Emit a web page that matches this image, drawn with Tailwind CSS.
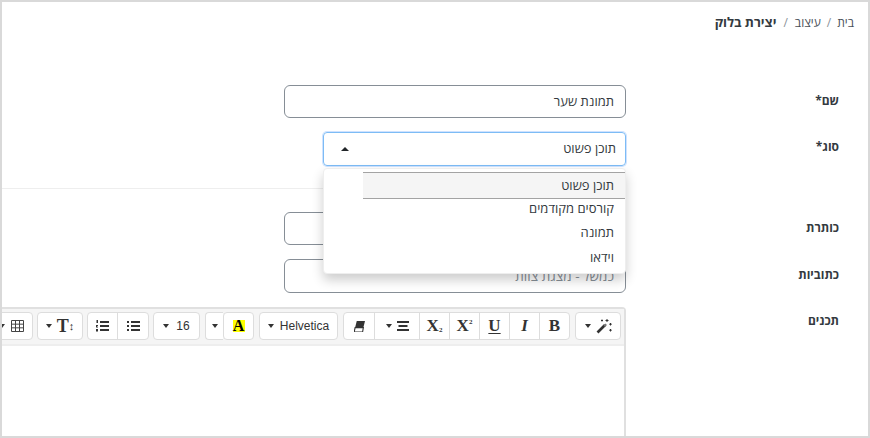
<!DOCTYPE html>
<html lang="he" dir="rtl">
<head>
<meta charset="utf-8">
<script src="https://cdn.jsdelivr.net/npm/@tailwindcss/browser@4"></script>
</head>
<body class="bg-white">
<div class="relative w-[870px] h-[438px] overflow-hidden bg-white border-2 border-[#d9d9d9] font-['Open_Sans','Liberation_Sans',sans-serif] text-[13px] text-[#343a40]">
  <nav class="h-[83px] pt-[11px] pr-[14px]">
    <ol class="flex items-center h-[19px] text-[12px] text-[#495057]">
      <li>בית</li>
      <li class="px-[6px] text-[#8a9299]">/</li>
      <li>עיצוב</li>
      <li class="px-[7px] text-[#8a9299]">/</li>
      <li class="font-bold text-[13px] text-[#343a40]">יצירת בלוק</li>
    </ol>
  </nav>

  <div class="flex mb-[14px]">
    <label class="w-[242px] shrink-0 h-[32px] pr-[29px] flex items-center font-bold text-[12px]">שם*</label>
    <div class="w-[342px] h-[33px] flex items-center pt-[1px] pr-[11px] pl-[12px] rounded-[6px] border border-[#868e96]">תמונת שער</div>
  </div>

  <div class="flex">
    <label class="w-[242px] shrink-0 h-[30px] pr-[29px] flex items-center font-bold text-[12px]">סוג*</label>
    <div class="relative w-[303px] h-[34px]">
      <div class="h-full flex items-center justify-between pr-[9px] pl-[17px] rounded-[4px] border border-[#7dbcf5] shadow-[0_0_0_1px_rgba(13,110,253,0.2)]">
        <span>תוכן פשוט</span>
        <span class="w-0 h-0 border-x-[4px] border-b-[4px] border-x-transparent border-b-[#212529]"></span>
      </div>
      <ul class="absolute z-10 top-[36px] right-0 w-[303px] h-[106px] pt-[3px] bg-white rounded-[4px] border border-[#eeeeee] shadow-[0_6px_12px_rgba(0,0,0,0.2)]">
        <li class="w-[262px] h-[27px] flex items-center pr-[11px] bg-[#f5f5f5] border-y border-[#a3a3a3]">תוכן פשוט</li>
        <li class="h-[23px] mt-[-2px] flex items-center pr-[11px]">קורסים מקודמים</li>
        <li class="h-[25px] flex items-center pr-[11px]">תמונה</li>
        <li class="h-[25px] flex items-center pr-[11px]">וידאו</li>
      </ul>
    </div>
  </div>

  <div class="mt-[22px] mb-[23px] mr-[242px] h-px bg-[#eeeeee]"></div>

  <div class="flex mb-[14px]">
    <label class="w-[242px] shrink-0 h-[32px] pr-[29px] flex items-center font-bold text-[12px]">כותרת</label>
    <div class="w-[342px] h-[33px] rounded-[6px] border border-[#868e96]"></div>
  </div>

  <div class="flex mb-[14px]">
    <label class="w-[242px] shrink-0 h-[32px] pr-[29px] flex items-center font-bold text-[12px]">כתוביות</label>
    <div class="w-[342px] h-[34px] flex items-center pr-[11px] pl-[12px] rounded-[6px] border border-[#868e96] text-[13.5px] text-[#868e96]">כמשל - מצגת צוות</div>
  </div>

  <div class="flex">
    <label class="w-[242px] shrink-0 h-[28px] pr-[29px] flex items-center font-bold text-[12px]">תכנים</label>
    <div class="w-[650px] shrink-0 h-[140px] rounded-t-[4px] border-2 border-[#e0e0e0] border-b-0">
      <div class="h-[37px] flex items-start pt-[3px] pr-[3px] bg-[#f5f5f5] border-b-2 border-[#eeeeee] font-['Liberation_Serif',serif] text-[#333]">

        <div class="w-[46px] h-[28px] shrink-0 flex items-center justify-center gap-[5px] bg-white border border-[#dddddd] rounded-[4px]">
          <svg width="16" height="16" viewBox="0 0 16 16" fill="none" stroke="#333"><path d="M1.500 14.500 9 7" stroke-width="2.600"/><path d="M8.500 6.500l1.500 1.500" stroke-width="2.600" stroke="#777"/><path d="M11 1v3M9.500 2.500h3M14.500 5v2.500M13.200 6.200h2.600M14.500 11v2.500M13.200 12.200h2.600M6 1.500v2M5 2.500h2" stroke-width="1"/></svg>
          <span class="w-0 h-0 border-x-[3px] border-t-[4px] border-x-transparent border-t-[#333]"></span>
        </div>

        <div class="mr-[5px] h-[28px] shrink-0 flex bg-white border border-[#dddddd] rounded-[4px] text-[17px] font-bold">
          <div class="w-[30px] flex items-center justify-center border-l border-[#dddddd]">B</div>
          <div class="w-[30px] flex items-center justify-center border-l border-[#dddddd] italic">I</div>
          <div class="w-[30px] flex items-center justify-center border-l border-[#dddddd]"><span class="underline underline-offset-2">U</span></div>
          <div class="w-[30px] flex items-center justify-center border-l border-[#dddddd]" dir="ltr">X<span class="text-[7px] mb-[8px]">2</span></div>
          <div class="w-[30px] flex items-center justify-center border-l border-[#dddddd]" dir="ltr">X<span class="text-[7px] mt-[9px]">2</span></div>
          <div class="w-[45px] flex items-center justify-center gap-[5px] border-l border-[#dddddd]">
            <svg width="12" height="10" viewBox="0 0 12 10" fill="#333"><path d="M0 0h12v2H0zM1.500 4h9v2h-9zM0 8h12v2H0z"/></svg>
            <span class="w-0 h-0 border-x-[3px] border-t-[4px] border-x-transparent border-t-[#333]"></span>
          </div>
          <div class="w-[30px] flex items-center justify-center">
            <svg width="11" height="11" viewBox="0 0 10 10"><path d="M2.500 0H10L8.500 6H1z" fill="#333"/><path d="M1 6h7.500L7.800 10H.2z" fill="#fff" stroke="#333" stroke-width="1"/></svg>
          </div>
        </div>

        <div class="mr-[5px] w-[79px] h-[28px] shrink-0 flex items-center justify-center gap-[6px] bg-white border border-[#dddddd] rounded-[4px] font-['Liberation_Sans',sans-serif] text-[12px]">
          <span>Helvetica</span>
          <span class="w-0 h-0 border-x-[3px] border-t-[4px] border-x-transparent border-t-[#333]"></span>
        </div>

        <div class="mr-[5px] h-[28px] shrink-0 flex">
          <div class="w-[31px] flex items-center justify-center bg-white border border-[#dddddd] rounded-[4px]">
            <span class="w-[12px] h-[12px] bg-[#ffff00] flex items-center justify-center text-[16px] font-bold text-black leading-none">A</span>
          </div>
          <div class="w-[18px] flex items-center justify-center bg-white border border-r-0 border-[#dddddd] rounded-l-[4px]">
            <span class="w-0 h-0 border-x-[3px] border-t-[4px] border-x-transparent border-t-[#333]"></span>
          </div>
        </div>

        <div class="mr-[5px] w-[47px] h-[28px] shrink-0 flex items-center justify-center gap-[7px] bg-white border border-[#dddddd] rounded-[4px] font-['Liberation_Sans',sans-serif] text-[12px]">
          <span>16</span>
          <span class="w-0 h-0 border-x-[3px] border-t-[4px] border-x-transparent border-t-[#333]"></span>
        </div>

        <div class="mr-[4px] h-[28px] shrink-0 flex bg-white border border-[#dddddd] rounded-[4px]">
          <div class="w-[31px] flex items-center justify-center border-l border-[#dddddd]">
            <svg width="13" height="10" viewBox="0 0 13 10" fill="#333"><path d="M0 0h2v2H0zM4 0h9v2H4zM0 4h2v2H0zM4 4h9v2H4zM0 8h2v2H0zM4 8h9v2H4z"/></svg>
          </div>
          <div class="w-[29px] flex items-center justify-center">
            <svg width="13" height="12" viewBox="0 0 13 12" fill="#333"><path d="M4 1h9v2H4zM4 5h9v2H4zM4 9h9v2H4zM.5 0h1.500v3H.5zM0 5h2v.8L1 7h1v.5H0zM0 9h2v2.500H0z"/></svg>
          </div>
        </div>

        <div class="mr-[4px] w-[46px] h-[28px] shrink-0 flex items-center justify-center gap-[5px] bg-white border border-[#dddddd] rounded-[4px] font-bold text-[18px]">
          <span dir="ltr" class="flex items-center">T<span class="text-[11px] font-normal">↕</span></span>
          <span class="w-0 h-0 border-x-[3px] border-t-[4px] border-x-transparent border-t-[#333]"></span>
        </div>

        <div class="mr-[4px] w-[45px] h-[28px] shrink-0 flex items-center pr-[8px] gap-[6px] bg-white border border-[#dddddd] rounded-[4px]">
          <svg class="shrink-0" width="13" height="12" viewBox="0 0 13 12" fill="none" stroke="#444"><path d="M.5.500h12v11H.500zM.5 4.170h12M.5 7.830h12M4.500.500v11M8.500.500v11"/></svg>
          <span class="shrink-0 w-0 h-0 border-x-[3px] border-t-[4px] border-x-transparent border-t-[#333]"></span>
        </div>
      </div>
      <div class="h-[100px] bg-white"></div>
    </div>
  </div>
</div>
</body>
</html>
